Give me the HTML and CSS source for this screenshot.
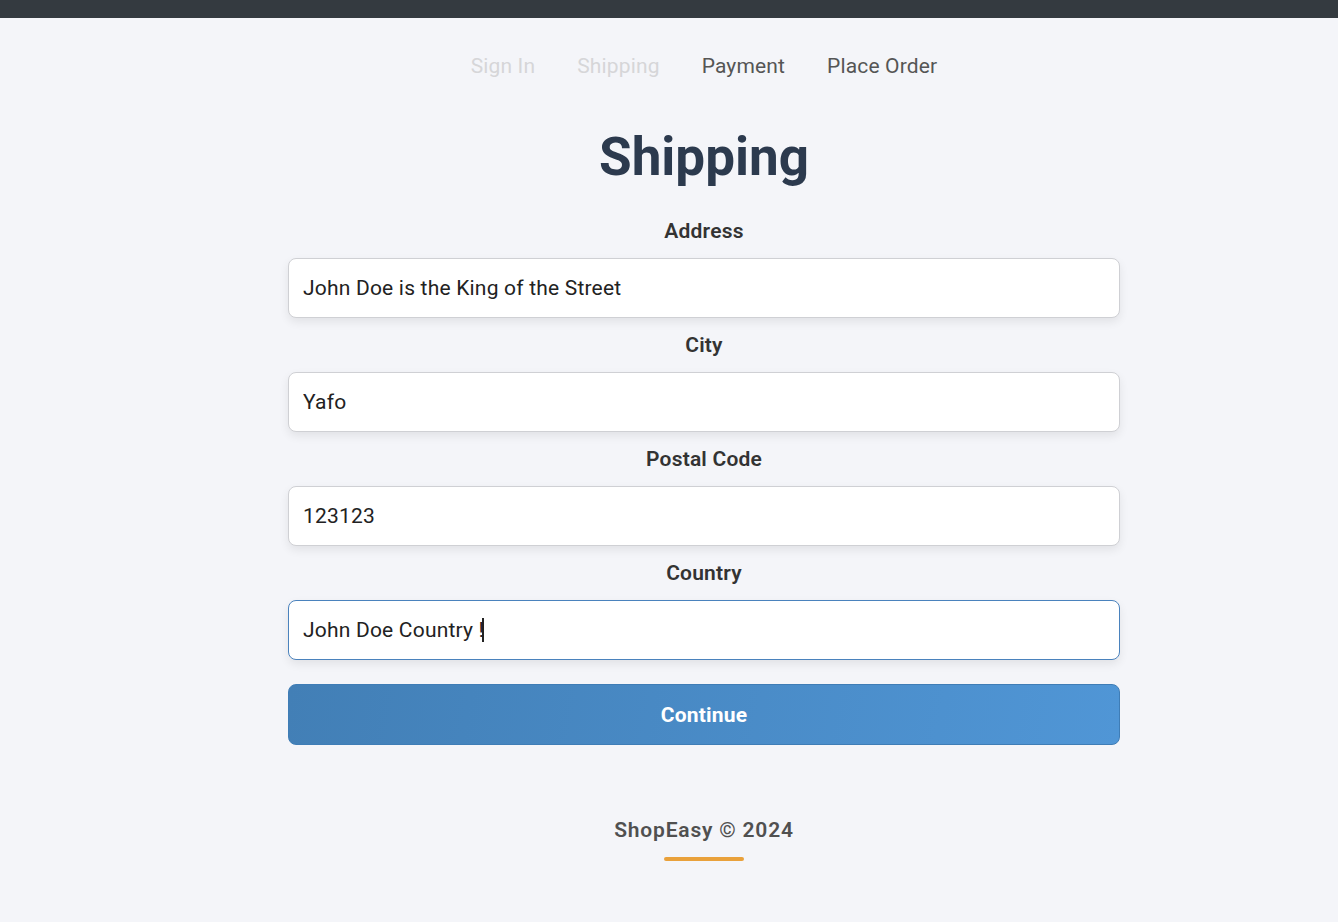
FILE: index.html
```html
<!DOCTYPE html>
<html lang="en">
<head>
<meta charset="utf-8">
<title>Shipping - ShopEasy</title>
<link rel="stylesheet" href="styles.css">
</head>
<body>
<header class="topbar"></header>
<main class="main">
  <nav class="steps">
    <a class="step step-done">Sign In</a>
    <a class="step step-done">Shipping</a>
    <a class="step">Payment</a>
    <a class="step">Place Order</a>
  </nav>
  <h1 class="title">Shipping</h1>
  <form class="form">
    <label class="label" for="address">Address</label>
    <input class="field" id="address" type="text" value="John Doe is the King of the Street">
    <label class="label" for="city">City</label>
    <input class="field" id="city" type="text" value="Yafo">
    <label class="label" for="postal">Postal Code</label>
    <input class="field" id="postal" type="text" value="123123">
    <label class="label" for="country">Country</label>
    <div class="field-wrap">
      <input class="field field-focus" id="country" type="text" value="John Doe Country !">
      <span class="caret"></span>
    </div>
    <button class="btn" type="button">Continue</button>
  </form>
  <footer class="footer">
    <p class="footer-text">ShopEasy © 2024</p>
    <span class="footer-line"></span>
  </footer>
</main>
</body>
</html>
```

FILE: styles.css
```css
* { box-sizing: border-box; }
html, body { margin: 0; padding: 0; }
body {
  background: #f4f5f9;
  font-family: Roboto, "Liberation Sans", Arial, sans-serif;
  color: #222;
  min-height: 922px;
}
.topbar {
  height: 18px;
  background: #343a40;
}
.main {
  padding-left: 70px;
  display: flex;
  flex-direction: column;
  align-items: center;
}
.steps {
  display: flex;
  gap: 42px;
  padding-top: 36px;
}
.step {
  font-size: 21px;
  line-height: 24px;
  letter-spacing: 0.15px;
  color: #555;
  text-decoration: none;
}
.step-done { color: #d6d6d8; }
.title {
  margin: 47px 0 0;
  font-size: 53px;
  line-height: 64px;
  font-weight: 700;
  color: #2c3a4e;
}
.form {
  width: 832px;
  margin-top: 30px;
  display: flex;
  flex-direction: column;
}
.label {
  display: block;
  text-align: center;
  font-size: 21px;
  line-height: 24px;
  letter-spacing: 0.2px;
  font-weight: 600;
  color: #333;
  margin-bottom: 15px;
}
.field-wrap { position: relative; }
.field {
  display: block;
  width: 100%;
  height: 60px;
  padding: 0 14px;
  margin: 0 0 15px;
  border: 1px solid #cfd0d4;
  border-radius: 8px;
  background: #fff;
  box-shadow: 0 4px 10px rgba(0, 0, 0, 0.08);
  font-family: inherit;
  font-size: 21px;
  letter-spacing: 0.2px;
  color: #222;
  outline: none;
}
.field-focus {
  border-color: #4a82bd;
}
.caret {
  position: absolute;
  left: 194px;
  top: 18px;
  width: 2px;
  height: 24px;
  background: #222;
}
.btn {
  margin-top: 9px;
  height: 61px;
  border: 1px solid #3f7db6;
  border-radius: 8px;
  background: linear-gradient(100deg, #427fb6 0%, #5096d6 100%);
  color: #fff;
  font-family: inherit;
  font-size: 21px;
  letter-spacing: 0.2px;
  font-weight: 700;
  cursor: pointer;
}
.footer {
  margin-top: 73px;
  display: flex;
  flex-direction: column;
  align-items: center;
}
.footer-text {
  margin: 0;
  font-size: 21px;
  line-height: 24px;
  font-weight: 600;
  letter-spacing: 0.8px;
  color: #505050;
}
.footer-line {
  margin-top: 15px;
  width: 80px;
  height: 4px;
  border-radius: 2px;
  background: #e9a13b;
}
```
